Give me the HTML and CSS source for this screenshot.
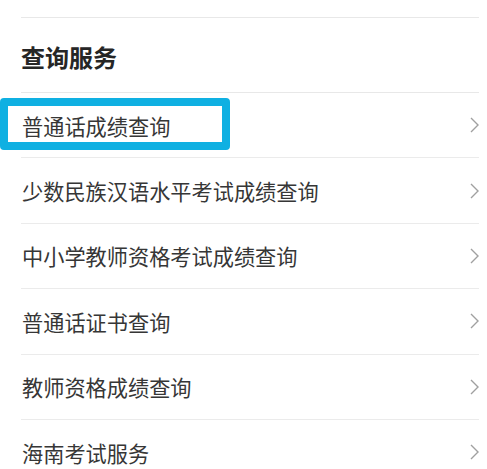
FILE: index.html
```html
<!DOCTYPE html>
<html lang="zh-CN">
<head>
<meta charset="utf-8">
<link rel="stylesheet" href="styles.css">
</head>
<body>
<div class="page">
  <div class="prev"></div>
  <div class="section-title">查询服务</div>
  <ul class="list">
    <li class="row"><span class="label">普通话成绩查询</span><svg class="chev" viewBox="0 0 9 16"><path d="M1 1 L8 8 L1 15" /></svg></li>
    <li class="row"><span class="label">少数民族汉语水平考试成绩查询</span><svg class="chev" viewBox="0 0 9 16"><path d="M1 1 L8 8 L1 15" /></svg></li>
    <li class="row"><span class="label">中小学教师资格考试成绩查询</span><svg class="chev" viewBox="0 0 9 16"><path d="M1 1 L8 8 L1 15" /></svg></li>
    <li class="row"><span class="label">普通话证书查询</span><svg class="chev" viewBox="0 0 9 16"><path d="M1 1 L8 8 L1 15" /></svg></li>
    <li class="row"><span class="label">教师资格成绩查询</span><svg class="chev" viewBox="0 0 9 16"><path d="M1 1 L8 8 L1 15" /></svg></li>
    <li class="row"><span class="label">海南考试服务</span><svg class="chev" viewBox="0 0 9 16"><path d="M1 1 L8 8 L1 15" /></svg></li>
  </ul>
  <div class="highlight"></div>
</div>
</body>
</html>
```
FILE: styles.css
```css
html, body {
  margin: 0;
  padding: 0;
  background: #ffffff;
}
body {
  font-family: "Noto Sans CJK SC", "Noto Sans", sans-serif;
  color: #333333;
  overflow: hidden;
}
.page {
  position: relative;
  margin: 0 8px 0 21px;
}
.prev {
  height: 17px;
  border-bottom: 1px solid #e8e8e8;
}
.section-title {
  box-sizing: border-box;
  height: 75px;
  padding-top: 3px;
  display: flex;
  align-items: center;
  font-size: 24px;
  font-weight: 700;
  color: #262626;
  border-bottom: 1px solid #e8e8e8;
}
.list {
  list-style: none;
  margin: 0;
  padding: 0;
}
.row {
  box-sizing: content-box;
  height: 64.4px;
  display: flex;
  align-items: center;
  justify-content: space-between;
  border-bottom: 1px solid #ebebeb;
}
.label {
  font-size: 21.2px;
  color: #363636;
  padding-left: 1px;
}
.chev {
  width: 9px;
  height: 16px;
  fill: none;
  stroke: #a0a0a0;
  stroke-width: 1.4;
}
.highlight {
  position: absolute;
  left: -21px;
  top: 98px;
  width: 214px;
  height: 36px;
  border: 8px solid #0fb0e2;
  border-radius: 4px;
}
```
